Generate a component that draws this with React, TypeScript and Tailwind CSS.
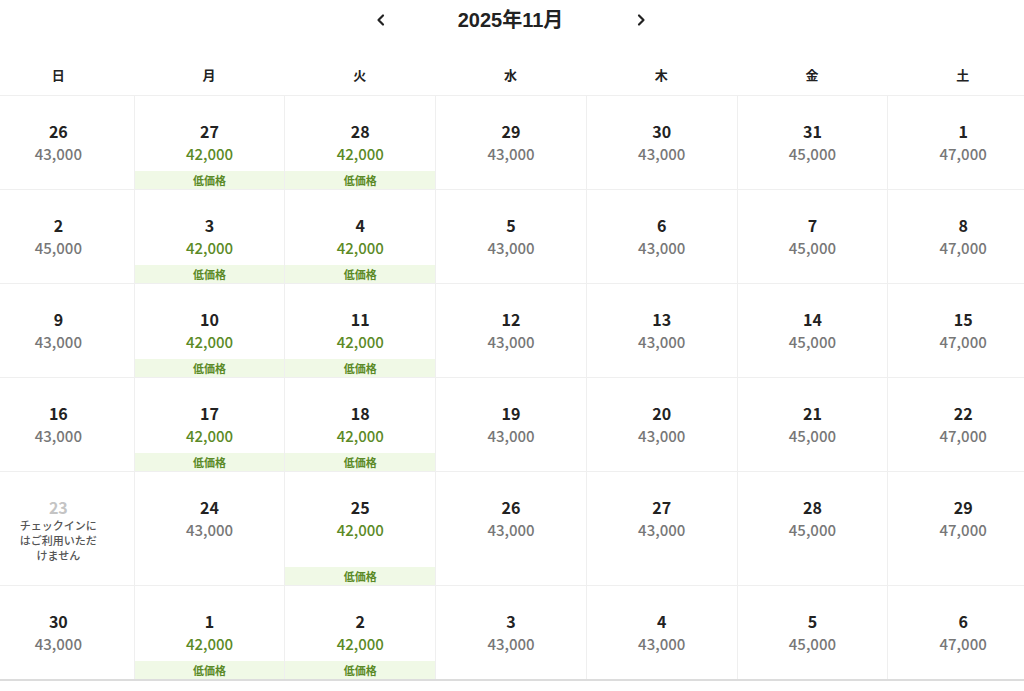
import React from "react";

type Day = {
  d: number;
  price?: string;
  low?: boolean;
  off?: boolean;
};

const weekdays = ["日", "月", "火", "水", "木", "金", "土"];

const rows: Day[][] = [
  [
    { d: 26, price: "43,000" },
    { d: 27, price: "42,000", low: true },
    { d: 28, price: "42,000", low: true },
    { d: 29, price: "43,000" },
    { d: 30, price: "43,000" },
    { d: 31, price: "45,000" },
    { d: 1, price: "47,000" },
  ],
  [
    { d: 2, price: "45,000" },
    { d: 3, price: "42,000", low: true },
    { d: 4, price: "42,000", low: true },
    { d: 5, price: "43,000" },
    { d: 6, price: "43,000" },
    { d: 7, price: "45,000" },
    { d: 8, price: "47,000" },
  ],
  [
    { d: 9, price: "43,000" },
    { d: 10, price: "42,000", low: true },
    { d: 11, price: "42,000", low: true },
    { d: 12, price: "43,000" },
    { d: 13, price: "43,000" },
    { d: 14, price: "45,000" },
    { d: 15, price: "47,000" },
  ],
  [
    { d: 16, price: "43,000" },
    { d: 17, price: "42,000", low: true },
    { d: 18, price: "42,000", low: true },
    { d: 19, price: "43,000" },
    { d: 20, price: "43,000" },
    { d: 21, price: "45,000" },
    { d: 22, price: "47,000" },
  ],
  [
    { d: 23, off: true },
    { d: 24, price: "43,000" },
    { d: 25, price: "42,000", low: true },
    { d: 26, price: "43,000" },
    { d: 27, price: "43,000" },
    { d: 28, price: "45,000" },
    { d: 29, price: "47,000" },
  ],
  [
    { d: 30, price: "43,000" },
    { d: 1, price: "42,000", low: true },
    { d: 2, price: "42,000", low: true },
    { d: 3, price: "43,000" },
    { d: 4, price: "43,000" },
    { d: 5, price: "45,000" },
    { d: 6, price: "47,000" },
  ],
];

const Chevron = ({ dir }: { dir: "left" | "right" }) => (
  <svg width="12" height="14" viewBox="0 0 12 14" fill="none">
    <path
      d={dir === "left" ? "M8 2.5 L3.5 7 L8 11.5" : "M4 2.5 L8.5 7 L4 11.5"}
      stroke="#222"
      strokeWidth="2.2"
      strokeLinecap="round"
      strokeLinejoin="round"
    />
  </svg>
);

const Cell = ({ day, col }: { day: Day; col: number }) => (
  <div
    className={`flex flex-col items-center min-h-[93px] pt-[24px] ${
      col > 0 ? "border-l border-[#efefef]" : ""
    }`}
  >
    {day.off ? (
      <>
        <div className="text-[16px] leading-[22px] font-bold text-[#c4c4c4]">{day.d}</div>
        <div className="w-[80px] text-center text-[11px] leading-[15px] font-medium text-[#555] pb-[22px]">
          チェックインにはご利用いただけません
        </div>
      </>
    ) : (
      <>
        <div className="text-[16px] leading-[22px] font-bold text-[#222]">{day.d}</div>
        <div
          className={`text-[15px] leading-[24px] font-medium ${
            day.low ? "text-[#5b8a26]" : "text-[#777]"
          }`}
        >
          {day.price}
        </div>
        {day.low && (
          <div className="mt-auto w-full h-[18px] bg-[#f0f9e6] flex items-center justify-center text-[11px] font-bold text-[#5b8a26]">
            低価格
          </div>
        )}
      </>
    )}
  </div>
);

export default function App() {
  return (
    <div
      className="w-[1024px] h-[691px] overflow-hidden bg-white"
      style={{ fontFamily: '"Noto Sans CJK JP", "Noto Sans", sans-serif' }}
    >
      <div className="w-[1055px] -ml-[17px]">
        <div className="flex items-center justify-center h-[40px]">
          <button className="w-[20px] flex justify-center">
            <Chevron dir="left" />
          </button>
          <div
            className="w-[240px] text-center text-[20px] font-semibold text-[#222]"
            style={{ fontFamily: '"Liberation Sans", "Noto Sans CJK JP", sans-serif' }}
          >
            2025年11月
          </div>
          <button className="w-[20px] flex justify-center">
            <Chevron dir="right" />
          </button>
        </div>
        <div className="grid grid-cols-7 h-[55px] items-center pt-[14px]">
          {weekdays.map((w) => (
            <div key={w} className="text-center text-[13px] font-bold text-[#222]">
              {w}
            </div>
          ))}
        </div>
        <div className="border-t border-[#efefef]">
          {rows.map((r, i) => (
            <div
              key={i}
              className={`grid grid-cols-7 ${
                i < rows.length - 1 ? "border-b border-[#efefef]" : "border-b-2 border-[#dcdcdc]"
              }`}
            >
              {r.map((day, j) => (
                <Cell key={j} day={day} col={j} />
              ))}
            </div>
          ))}
        </div>
      </div>
    </div>
  );
}
